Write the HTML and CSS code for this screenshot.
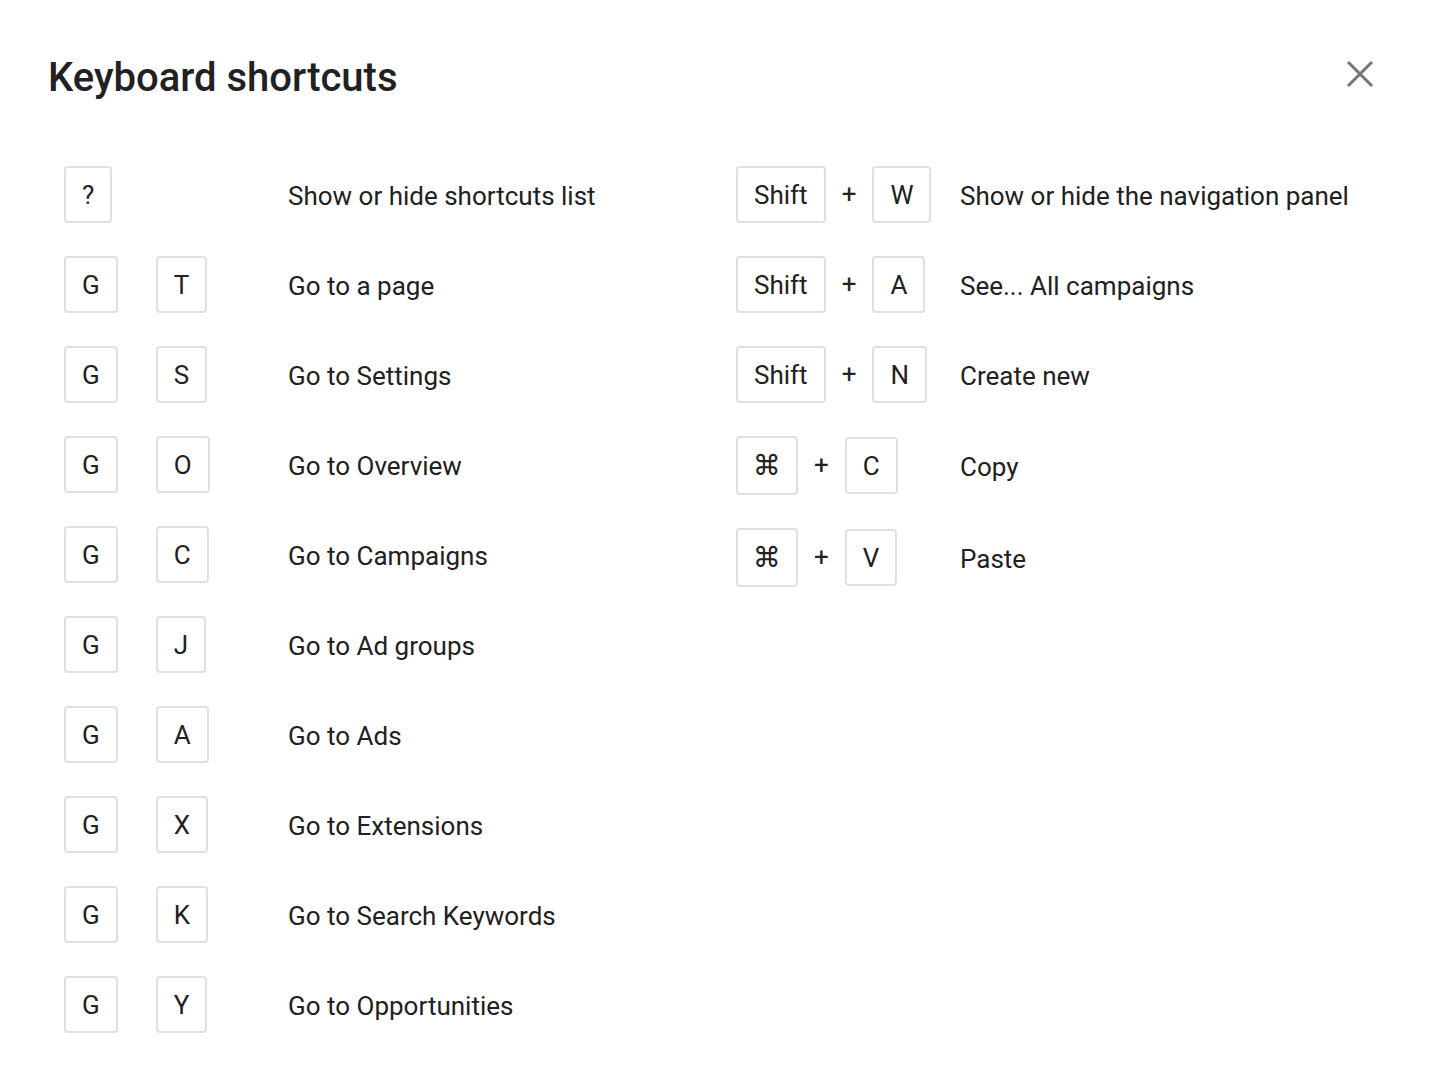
FILE: index.html
```html
<html>
<head>
    <link rel="stylesheet" href="styles.css">
</head>
<body>
    <div class="dialog">
        <div class="header">
            <h1>Keyboard shortcuts</h1>
            <button class="close" aria-label="Close">
                <svg width="28" height="28" viewBox="0 0 28 28">
                    <path d="M2 2 L26 26 M26 2 L2 26" stroke="#757575" stroke-width="3" fill="none"/>
                </svg>
            </button>
        </div>

        <div class="columns">
            <div class="column">
                <div class="row">
                    <div class="keys"><span class="key">?</span></div>
                    <div class="desc">Show or hide shortcuts list</div>
                </div>
                <div class="row">
                    <div class="keys seq"><span class="key">G</span><span class="key">T</span></div>
                    <div class="desc">Go to a page</div>
                </div>
                <div class="row">
                    <div class="keys seq"><span class="key">G</span><span class="key">S</span></div>
                    <div class="desc">Go to Settings</div>
                </div>
                <div class="row">
                    <div class="keys seq"><span class="key">G</span><span class="key">O</span></div>
                    <div class="desc">Go to Overview</div>
                </div>
                <div class="row">
                    <div class="keys seq"><span class="key">G</span><span class="key">C</span></div>
                    <div class="desc">Go to Campaigns</div>
                </div>
                <div class="row">
                    <div class="keys seq"><span class="key">G</span><span class="key">J</span></div>
                    <div class="desc">Go to Ad groups</div>
                </div>
                <div class="row">
                    <div class="keys seq"><span class="key">G</span><span class="key">A</span></div>
                    <div class="desc">Go to Ads</div>
                </div>
                <div class="row">
                    <div class="keys seq"><span class="key">G</span><span class="key">X</span></div>
                    <div class="desc">Go to Extensions</div>
                </div>
                <div class="row">
                    <div class="keys seq"><span class="key">G</span><span class="key">K</span></div>
                    <div class="desc">Go to Search Keywords</div>
                </div>
                <div class="row">
                    <div class="keys seq"><span class="key">G</span><span class="key">Y</span></div>
                    <div class="desc">Go to Opportunities</div>
                </div>
            </div>

            <div class="column">
                <div class="row">
                    <div class="keys"><span class="key">Shift</span><span class="plus">+</span><span class="key">W</span></div>
                    <div class="desc">Show or hide the navigation panel</div>
                </div>
                <div class="row">
                    <div class="keys"><span class="key">Shift</span><span class="plus">+</span><span class="key">A</span></div>
                    <div class="desc">See... All campaigns</div>
                </div>
                <div class="row">
                    <div class="keys"><span class="key">Shift</span><span class="plus">+</span><span class="key">N</span></div>
                    <div class="desc">Create new</div>
                </div>
                <div class="row">
                    <div class="keys"><span class="key cmd">&#8984;</span><span class="plus">+</span><span class="key">C</span></div>
                    <div class="desc">Copy</div>
                </div>
                <div class="row">
                    <div class="keys"><span class="key cmd">&#8984;</span><span class="plus">+</span><span class="key">V</span></div>
                    <div class="desc">Paste</div>
                </div>
            </div>
        </div>
    </div>
</body>
</html>
```

FILE: styles.css
```css
body {
    margin: 0;
    font-family: Roboto, "Liberation Sans", sans-serif;
    color: #212121;
    background: #fff;
}
.dialog {
    padding: 48px 48px 40px 48px;
}
.header {
    display: flex;
    justify-content: space-between;
    align-items: flex-start;
}
h1 {
    margin: 6px 0 0 0;
    font-size: 40px;
    font-weight: 500;
    line-height: 48px;
}
.close {
    background: none;
    border: none;
    padding: 0;
    margin: 12px 14px 0 0;
    width: 28px;
    height: 28px;
    cursor: pointer;
}
.close svg {
    display: block;
}
.columns {
    display: grid;
    grid-template-columns: 672px 1fr;
    padding-left: 16px;
    margin-top: 64px;
}
.column {
    display: flex;
    flex-direction: column;
    gap: 33px;
}
.row {
    display: flex;
    align-items: center;
    font-size: 26px;
}
.keys {
    display: flex;
    align-items: center;
    width: 224px;
    flex-shrink: 0;
}
.keys.seq {
    gap: 38px;
}
.key {
    display: inline-block;
    border: 2px solid #e0e0e0;
    border-radius: 4px;
    padding: 13px 16px 11px 16px;
    line-height: 29px;
    text-align: center;
}
.key.cmd {
    font-family: "DejaVu Sans", sans-serif;
    font-size: 28px;
    line-height: 31px;
    padding: 12px 15px;
}
.plus {
    margin: 0 16px;
    line-height: 29px;
}
.desc {
    line-height: 30px;
    padding-top: 2px;
}
```
